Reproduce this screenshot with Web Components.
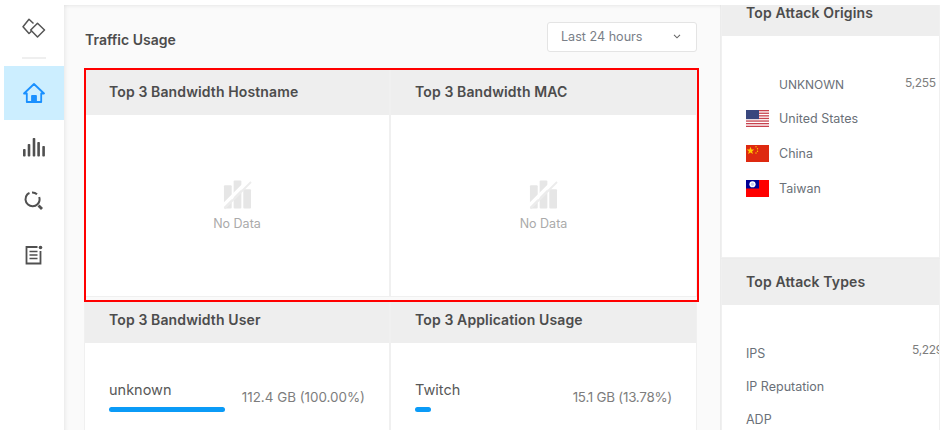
<!DOCTYPE html>
<html>
<head>
<meta charset="utf-8">
<title>Dashboard</title>
<style>
  html, body { margin: 0; height: 430px; overflow: hidden; background: #fff; }
  body { font-family: Inter, "Open Sans", sans-serif; }
</style>
</head>
<body>
<dash-page></dash-page>

<script>
// Small helper so every element gets an open shadow root from a string
class Base extends HTMLElement {
  constructor() {
    super();
    this.attachShadow({ mode: 'open' });
    this.shadowRoot.innerHTML = this.markup();
  }
  markup() { return ''; }
}

class NavItem extends Base {
  markup() {
    return `
      <style>
        :host { display: flex; align-items: center; justify-content: center; height: 54px; color: #505050; margin-left: 4px; }
        :host([active]) { background: #cceeff; color: #1a90ff; }
      </style>
      <slot></slot>`;
  }
}

class SideBar extends Base {
  markup() {
    return `
      <style>
        :host { display: flex; flex-direction: column; width: 64px; flex: none; height: 430px; background: #fff; position: relative; z-index: 1; }
        .logo { height: 57px; display: flex; align-items: flex-end; justify-content: center; padding-left: 4px; color: #555; }
        .logo svg { margin-bottom: 19px; }
        .rule { height: 2px; width: 24px; background: #efefef; margin: 0 0 7px 22px; }
      </style>
      <div class="logo">
        <svg width="24" height="20" viewBox="0 0 24 20" fill="none" stroke="currentColor" stroke-width="1.5" stroke-linejoin="round">
          <path d="M11.500 5.500L7 1.200 1 8.800l6 6.700 2.500-2.300"/>
          <path d="M15.500 5.200l7 6.800-7 7-6.800-7z"/>
        </svg>
      </div>
      <div class="rule"></div>
      <div><slot></slot></div>`;
  }
}

class SelectBox extends Base {
  markup() {
    return `
      <style>
        :host { display: flex; align-items: center; justify-content: space-between; box-sizing: border-box; width: 150px; height: 30px; padding: 0 15px 2px 13px; background: #fff; border: 1px solid #e4e4e4; border-radius: 3px; color: #7a8088; font-size: 12.6px; }
        svg { display: block; }
      </style>
      <slot></slot>
      <svg width="8" height="5" viewBox="0 0 8 5" fill="none" stroke="#666" stroke-width="1.1"><path d="M1 .8l3 3 3-3"/></svg>`;
  }
}

class PanelCard extends Base {
  markup() {
    return `
      <style>
        :host { display: flex; flex-direction: column; box-sizing: border-box; background: #fff; border: 1px solid #f0f0f0; border-width: 0 1px 1px 1px; min-width: 0; overflow: hidden; }
        .head { flex: none; height: var(--head, 46px); box-sizing: border-box; display: flex; align-items: center; padding: var(--head-pad, 0 24px 2px); background: #eeeeee; color: #4c4c4c; font-size: 14px; letter-spacing: .12px; font-weight: 600; white-space: nowrap; }
        .body { flex: 1; min-height: 0; }
      </style>
      <div class="head"><slot name="title"></slot></div>
      <div class="body"><slot></slot></div>`;
  }
}

class NoData extends Base {
  markup() {
    return `
      <style>
        :host { display: flex; flex-direction: column; align-items: center; padding-top: 65px; color: #aaa; font-size: 12.5px; }
        svg { display: block; margin-bottom: 6px; }
      </style>
      <svg width="29" height="30" viewBox="0 0 30 30">
        <g fill="#e6e6e6">
          <rect x="1" y="5" width="8" height="24" rx="1"/>
          <rect x="11" y="0" width="8" height="29" rx="1"/>
          <rect x="21" y="9" width="8" height="20" rx="1"/>
        </g>
        <path d="M-1 27L27 -1" stroke="#fff" stroke-width="3.5"/>
        <path d="M1.500 29L29 1.500" stroke="#ececec" stroke-width="2"/>
      </svg>
      <span>No Data</span>`;
  }
}

class UsageRow extends Base {
  markup() {
    return `
      <style>
        :host { display: flex; justify-content: space-between; padding: 38px 24px 0 24px; }
        .name { font-size: 14.5px; line-height: 18px; color: #585858; }
        .bar { height: 5px; margin-top: 8px; border-radius: 3px; background: #0b9bf7; }
        .val { font-size: 13.4px; letter-spacing: var(--val-ls, 0); color: #7d7d7d; padding-top: 8px; white-space: nowrap; }
      </style>
      <div>
        <div class="name"><slot name="name"></slot></div>
        <div class="bar"></div>
      </div>
      <div class="val"><slot name="value"></slot></div>`;
  }
  connectedCallback() {
    this.shadowRoot.querySelector('.bar').style.width = this.getAttribute('bar') + 'px';
  }
}

class ListRow extends Base {
  markup() {
    return `
      <style>
        :host { display: flex; align-items: center; height: var(--row, 35px); color: #6a7078; font-size: 12.5px; white-space: nowrap; position: relative; }
        .flag { width: 23px; height: 17px; margin-right: 10px; flex: none; display: var(--flag, block); }
        .val { position: absolute; top: var(--val-top, 8px); left: var(--val-left, 159px); color: #7d7d7d; font-size: 12px; letter-spacing: -.3px; }
      </style>
      <div class="flag"><slot name="flag"></slot></div>
      <slot></slot>
      <span class="val"><slot name="value"></slot></span>`;
  }
}

class DashPage extends Base {
  markup() {
    return `
      <style>
        :host { display: flex; width: 940px; height: 430px; overflow: hidden; background: #fff; }
        .main { position: relative; flex: none; width: 656px; height: 425px; margin-top: 5px; box-sizing: border-box; background: #fafafa; padding: 17px 23px 0 20px; box-shadow: inset 0 4px 4px -4px #ddd, inset 5px 0 5px -5px #ddd; }
        .top { display: flex; justify-content: space-between; align-items: center; height: 30px; margin-bottom: 17px; }
        .top h2 { margin: 4px 0 0 1px; font-size: 14px; font-weight: 600; color: #4c4c4c; }
        .grid { display: grid; grid-template-columns: 306px 307px; grid-template-rows: 228px 140px; row-gap: 3px; }
        .row2 { --head: 43px; --head-pad: 0 24px 4px; }
        .mark { position: absolute; left: 20px; top: 63px; width: 615px; height: 234px; box-sizing: border-box; border: 2px solid #f00; pointer-events: none; }
        .side { flex: 1; min-width: 0; display: flex; flex-direction: column; gap: 1px; margin-top: 5px; background: #ececec; padding-left: 1px; box-shadow: inset 0 4px 4px -4px #ddd; }
        .origins { flex: none; height: 253px; --head: 31px; --head-pad: 0 24px 16px; }
        .types { flex: none; height: 200px; --head: 46px; }
        .list { padding: 31px 0 0 24px; }
        .unknown { --flag: none; --row: 34px; padding-left: 33px; font-size: 12px; }
        .types .list { padding-top: 32px; --flag: none; --row: 33px; --val-left: 166px; --val-top: 5px; }
      </style>
      <side-bar>
        <nav-item active>
          <svg width="22" height="20" viewBox="0 0 22 20" fill="none" stroke="currentColor" stroke-width="1.8" stroke-linejoin="round"><path d="M1 10.500L11 1l10 9.500h-2.800V19H3.800v-8.500z"/><path d="M9 19v-6h4v6z" fill="currentColor"/></svg>
        </nav-item>
        <nav-item>
          <svg width="22" height="20" viewBox="0 0 22 20" fill="currentColor"><rect y="12" width="2.600" height="7.500" rx=".8"/><rect x="4.700" y="7" width="2.600" height="12.500" rx=".8"/><rect x="9.700" y="1" width="2.600" height="18.500" rx=".8"/><rect x="14.300" y="5" width="2.600" height="14.500" rx=".8"/><rect x="19.300" y="9" width="2.600" height="10.500" rx=".8"/></svg>
        </nav-item>
        <nav-item>
          <svg width="20" height="20" viewBox="0 0 20 20" fill="none" stroke="currentColor" stroke-width="2"><path d="M8 1.500a7 7 0 0 1 5 1.800"/><path d="M15.200 6a7 7 0 0 1-1.700 7.200 7 7 0 0 1-9.500.3A7 7 0 0 1 3.200 3.500 7 7 0 0 1 5.500 2"/><path d="M14.500 14.500l3.500 3.500" stroke-width="2.800"/></svg>
        </nav-item>
        <nav-item>
          <svg width="18" height="20" viewBox="0 0 18 20" fill="none" stroke="currentColor" stroke-width="1.800"><path d="M12.500 2H1.500v16.500h14V6"/><path d="M4.500 6.500h8M4.500 10h8M4.500 13.500h8" stroke-width="1.500"/><circle cx="15.500" cy="2.500" r="1.800" fill="currentColor" stroke="none"/></svg>
        </nav-item>
      </side-bar>

      <div class="main">
        <div class="top">
          <h2>Traffic Usage</h2>
          <select-box>Last 24 hours</select-box>
        </div>
        <div class="grid">
          <panel-card><span slot="title">Top 3 Bandwidth Hostname</span><no-data></no-data></panel-card>
          <panel-card><span slot="title">Top 3 Bandwidth MAC</span><no-data></no-data></panel-card>
          <panel-card class="row2"><span slot="title">Top 3 Bandwidth User</span>
            <usage-row bar="116"><span slot="name">unknown</span><span slot="value">112.4 GB (100.00%)</span></usage-row>
          </panel-card>
          <panel-card class="row2"><span slot="title">Top 3 Application Usage</span>
            <usage-row bar="16" style="--val-ls:-.25px"><span slot="name">Twitch</span><span slot="value">15.1 GB (13.78%)</span></usage-row>
          </panel-card>
        </div>
        <div class="mark"></div>
      </div>

      <div class="side">
        <panel-card class="origins"><span slot="title">Top Attack Origins</span>
          <div class="list">
            <list-row class="unknown">UNKNOWN<span slot="value">5,255</span></list-row>
            <list-row>
              <svg slot="flag" width="23" height="17" viewBox="0 0 23 17" style="display:block">
                <rect width="23" height="17" fill="#fff"/>
                <g fill="#c8434f"><rect width="23" height="1.300"/><rect y="2.600" width="23" height="1.300"/><rect y="5.200" width="23" height="1.300"/><rect y="7.800" width="23" height="1.300"/><rect y="10.400" width="23" height="1.300"/><rect y="13" width="23" height="1.300"/><rect y="15.700" width="23" height="1.300"/></g>
                <rect width="13" height="9.100" fill="#39477e"/>
              </svg>
              United States
            </list-row>
            <list-row>
              <svg slot="flag" width="23" height="17" viewBox="0 0 23 17" style="display:block">
                <rect width="23" height="17" fill="#de2910"/>
                <path d="M4.500 1.800l1 2.700 2.800.1-2.200 1.700.8 2.700-2.400-1.600-2.400 1.600.8-2.700L.7 4.600l2.800-.1z" fill="#ffcc00"/>
                <g fill="#ffcc00"><circle cx="10" cy="1.800" r=".7"/><circle cx="11.500" cy="3.800" r=".7"/><circle cx="11.500" cy="6.300" r=".7"/><circle cx="10" cy="8" r=".7"/></g>
              </svg>
              China
            </list-row>
            <list-row>
              <svg slot="flag" width="23" height="17" viewBox="0 0 23 17" style="display:block">
                <rect width="23" height="17" fill="#fe0000"/>
                <rect width="13" height="8.500" fill="#000095"/>
                <circle cx="6.500" cy="4.250" r="3.100" fill="#fff"/>
                <circle cx="6.500" cy="4.250" r="1.700" fill="#c8c8f0"/>
              </svg>
              Taiwan
            </list-row>
          </div>
        </panel-card>
        <panel-card class="types"><span slot="title">Top Attack Types</span>
          <div class="list">
            <list-row>IPS<span slot="value">5,229</span></list-row>
            <list-row>IP Reputation</list-row>
            <list-row>ADP</list-row>
          </div>
        </panel-card>
      </div>
      `;
  }
}

customElements.define('nav-item', NavItem);
customElements.define('side-bar', SideBar);
customElements.define('select-box', SelectBox);
customElements.define('panel-card', PanelCard);
customElements.define('no-data', NoData);
customElements.define('usage-row', UsageRow);
customElements.define('list-row', ListRow);
customElements.define('dash-page', DashPage);
</script>
</body>
</html>
